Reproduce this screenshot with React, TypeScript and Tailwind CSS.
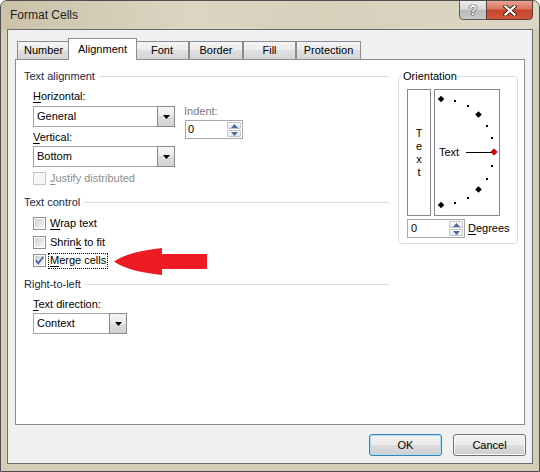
import React from "react";

function Tri({ up = false, color = "#000", w = 7, h = 4 }: { up?: boolean; color?: string; w?: number; h?: number }) {
  return (
    <svg width={w} height={h} viewBox={`0 0 ${w} ${h}`} className="block">
      <polygon points={up ? `0,${h} ${w / 2},0 ${w},${h}` : `0,0 ${w},0 ${w / 2},${h}`} fill={color} />
    </svg>
  );
}

function Dropdown({ value, className }: { value: string; className: string }) {
  return (
    <div className={`flex h-[21px] border border-[#a3a3a3] bg-white ${className}`}>
      <div className="flex-1 flex items-center pl-[3px]">{value}</div>
      <div className="-my-px -mr-px w-[18px] flex items-center justify-center border border-[#8a8a8a] bg-[linear-gradient(to_bottom,#f6f6f6,#e9e9e9_50%,#dcdcdc_50%,#d2d2d2)]">
        <Tri />
      </div>
    </div>
  );
}

function Spin({ value, className }: { value: string; className: string }) {
  return (
    <div className={`flex h-[19px] border border-[#a8a8a8] bg-white ${className}`}>
      <div className="flex-1 flex items-center pl-[2px]">{value}</div>
      <div className="w-[16px] flex flex-col gap-px p-px">
        <div className="flex-1 flex items-center justify-center border border-[#c2c4c8] rounded-[1px] bg-[linear-gradient(to_bottom,#fafafa,#e4e7eb)]">
          <Tri up color="#5068a0" w={7} h={4} />
        </div>
        <div className="flex-1 flex items-center justify-center border border-[#c2c4c8] rounded-[1px] bg-[linear-gradient(to_bottom,#fafafa,#e4e7eb)]">
          <Tri color="#5068a0" w={7} h={4} />
        </div>
      </div>
    </div>
  );
}

function CheckBox({ checked = false, disabled = false }: { checked?: boolean; disabled?: boolean }) {
  if (disabled) {
    return <div className="shrink-0 w-[13px] h-[13px] border border-[#c6c6c6] bg-[#f6f6f6]" />;
  }
  return (
    <div className="relative shrink-0 w-[13px] h-[13px] border border-[#8e8f8f] p-px bg-white">
      <div className="w-full h-full bg-[linear-gradient(135deg,#cfcfcf,#f7f7f7)]" />
      {checked && (
        <svg className="absolute left-0 top-0" width="11" height="11" viewBox="0 0 11 11">
          <path d="M2 5.3 L4.3 8.3 L9.3 1.8" fill="none" stroke="#4460a8" strokeWidth="1.7" />
        </svg>
      )}
    </div>
  );
}

function Header({ text, className = "" }: { text: string; className?: string }) {
  return (
    <div className={`flex items-center h-[14px] ${className}`}>
      <span className="text-[#1c2740]">{text}</span>
      <div className="flex-1 h-px bg-[#d5dfe5] ml-[4px]" />
    </div>
  );
}

function U({ c }: { c: string }) {
  return <span className="underline underline-offset-[2px]">{c}</span>;
}

function Dial() {
  const cx = 6;
  const cy = 62;
  const r = 53;
  const items: React.ReactNode[] = [];
  for (let a = 90; a >= -90; a -= 15) {
    const rad = (a * Math.PI) / 180;
    const x = cx + r * Math.cos(rad);
    const y = cy - r * Math.sin(rad);
    if (a % 45 === 0) {
      const d = 3.3;
      items.push(
        <polygon
          key={a}
          points={`${x},${y - d} ${x + d},${y} ${x},${y + d} ${x - d},${y}`}
          fill={a === 0 ? "#e00000" : "#000"}
          stroke={a === 0 ? "#7a0000" : "none"}
          strokeWidth={0.6}
        />
      );
    } else {
      items.push(<rect key={a} x={Math.round(x) - 1} y={Math.round(y) - 1} width={2} height={2} fill="#000" />);
    }
  }
  return (
    <div className="relative w-[66px] h-[127px] ml-[3px] border border-[#828790]">
      <svg className="absolute left-0 top-0" width="64" height="125" viewBox="0 0 64 125">
        <line x1="31" y1="62.5" x2="57" y2="62.5" stroke="#000" strokeWidth="1" />
        {items}
      </svg>
      <span className="absolute left-[4px] top-[55px] leading-[14px]">Text</span>
    </div>
  );
}

const tabBase =
  "h-[18px] flex items-center justify-center border border-b-0 border-[#898c95] bg-[linear-gradient(to_bottom,#f5f5f5,#ebebeb_50%,#dfdfdf_50%,#d6d6d6)]";

export default function App() {
  return (
    <div className="w-[540px] h-[472px] flex flex-col border border-[#4f4f4f] rounded-t-[7px] bg-[#d5cdb7] font-['Liberation_Sans',Arial,sans-serif] text-[11px] text-black overflow-hidden">
      {/* Title bar */}
      <div className="h-[28px] flex items-start bg-[linear-gradient(to_right,#cbc2a8,#dcd5c2_35%,#d8d0bb_60%,#ddd7c6)]">
        <span className="self-center pl-[9px] text-[12px] text-[#1e1e1e]">Format Cells</span>
        <div className="flex-1" />
        <div className="-mt-px mr-[6px] flex">
          <div className="w-[28px] h-[20px] flex items-center justify-center border border-[#5e5e5e] rounded-bl-[4px] bg-[linear-gradient(to_bottom,#ececec,#d3d3d3_50%,#b9b9b9_50%,#c9c9c9)]">
            <span className="text-[14px] font-bold text-white leading-none [text-shadow:0_0_1px_#222,0_0_1px_#222,0_0_1px_#222]">?</span>
          </div>
          <div className="w-[47px] h-[20px] -ml-px flex items-center justify-center border border-[#5a3a32] rounded-br-[4px] bg-[linear-gradient(to_bottom,#e9a293,#d9755f_45%,#c7432b_50%,#d2563c)]">
            <svg width="14" height="11" viewBox="0 0 14 11">
              <path d="M2.5 1.5 L11.5 9.5 M11.5 1.5 L2.5 9.5" stroke="#3a2622" strokeWidth="4" strokeLinecap="square" />
              <path d="M2.5 1.5 L11.5 9.5 M11.5 1.5 L2.5 9.5" stroke="#fff" strokeWidth="2.2" strokeLinecap="square" />
            </svg>
          </div>
        </div>
      </div>

      {/* Content */}
      <div className="flex-1 mx-[6px] mb-[7px] border border-[#6c6c6c] bg-[#f0f0f0] flex flex-col px-[7px]">
        {/* Tabs */}
        <div className="flex items-end h-[21px] mt-[8px] pl-[2px]">
          <div className={`${tabBase} w-[53px]`}>Number</div>
          <div className="relative z-10 -mx-[2px] -mb-px w-[69px] h-[22px] flex items-center justify-center border border-b-0 border-[#898c95] bg-white">
            Alignment
          </div>
          <div className={`${tabBase} w-[54px]`}>Font</div>
          <div className={`${tabBase} w-[54px]`}>Border</div>
          <div className={`${tabBase} w-[53px]`}>Fill</div>
          <div className={`${tabBase} w-[65px]`}>Protection</div>
        </div>

        {/* Panel */}
        <div className="h-[366px] border border-[#898c95] bg-white flex items-start">
          {/* Left column */}
          <div className="ml-[8px] w-[365px] pt-[9px] flex flex-col">
            <Header text="Text alignment" />
            <div className="flex pl-[9px]">
              <div className="w-[142px] flex flex-col">
                <div className="mt-[6px] h-[14px] leading-[14px]">
                  <U c="H" />orizontal:
                </div>
                <Dropdown value="General" className="mt-[3px] w-[142px]" />
                <div className="mt-[3px] h-[14px] leading-[14px]">
                  <U c="V" />ertical:
                </div>
                <Dropdown value="Bottom" className="mt-[2px] w-[142px]" />
              </div>
              <div className="ml-[9px] flex flex-col">
                <div className="mt-[21px] h-[14px] leading-[14px] text-[#7a7a7a]">Indent:</div>
                <Spin value="0" className="mt-[2px] ml-px w-[58px]" />
              </div>
            </div>
            <div className="mt-[5px] pl-[9px] h-[13px] flex items-center">
              <CheckBox disabled />
              <span className="ml-[4px] text-[#8d8d8d]">
                <U c="J" />ustify distributed
              </span>
            </div>

            <Header text="Text control" className="mt-[10px]" />
            <div className="mt-[8px] pl-[9px] h-[13px] flex items-center">
              <CheckBox />
              <span className="ml-[4px]">
                <U c="W" />rap text
              </span>
            </div>
            <div className="mt-[6px] pl-[9px] h-[13px] flex items-center">
              <CheckBox />
              <span className="ml-[4px]">
                Shrin<U c="k" /> to fit
              </span>
            </div>
            <div className="relative mt-[5px] pl-[9px] h-[13px] flex items-center">
              <CheckBox checked />
              <span className="ml-[2px] px-px h-[16px] flex items-center border border-dotted border-black">
                <span>
                  <U c="M" />erge cells
                </span>
              </span>
              <svg className="absolute left-[90px] top-[-6px]" width="94" height="27" viewBox="0 0 94 27">
                <path d="M0 13.5 Q14 3.5 48 0 L48 6 L93 6 L93 21 L48 21 L48 27 Q14 23.5 0 13.5 Z" fill="#ed1c24" />
              </svg>
            </div>

            <Header text="Right-to-left" className="mt-[10px]" />
            <div className="mt-[6px] pl-[9px] h-[14px] leading-[14px]">
              <U c="T" />ext direction:
            </div>
            <div className="pl-[9px] mt-[2px]">
              <Dropdown value="Context" className="w-[94px]" />
            </div>
          </div>

          {/* Orientation */}
          <fieldset className="ml-[9px] mt-[9px] w-[120px] border border-[#d5dfe5] rounded-[3px] pb-[5px]">
            <legend className="ml-[3px] px-px leading-[14px]">Orientation</legend>
            <div className="flex pl-[8px] pt-[6px]">
              <div className="w-[24px] h-[127px] border border-[#828790] flex flex-col items-center justify-center leading-[13px]">
                <span>T</span>
                <span>e</span>
                <span>x</span>
                <span>t</span>
              </div>
              <Dial />
            </div>
            <div className="flex items-center mt-[3px] pl-[8px]">
              <Spin value="0" className="w-[58px] pl-px" />
              <span className="ml-[3px]">
                <U c="D" />egrees
              </span>
            </div>
          </fieldset>
        </div>

        {/* Buttons */}
        <div className="flex justify-end gap-[11px] mt-[9px] -mr-px">
          <button className="w-[73px] h-[22px] rounded-[3px] border border-[#3c7fb1] shadow-[inset_0_0_0_1px_#a8e2f8] bg-[linear-gradient(to_bottom,#f2f2f2,#ebebeb_50%,#dddddd_50%,#cfcfcf)]">
            OK
          </button>
          <button className="w-[73px] h-[22px] rounded-[3px] border border-[#707070] shadow-[inset_0_0_0_1px_#fbfbfb] bg-[linear-gradient(to_bottom,#f2f2f2,#ebebeb_50%,#dddddd_50%,#cfcfcf)]">
            Cancel
          </button>
        </div>
      </div>
    </div>
  );
}
